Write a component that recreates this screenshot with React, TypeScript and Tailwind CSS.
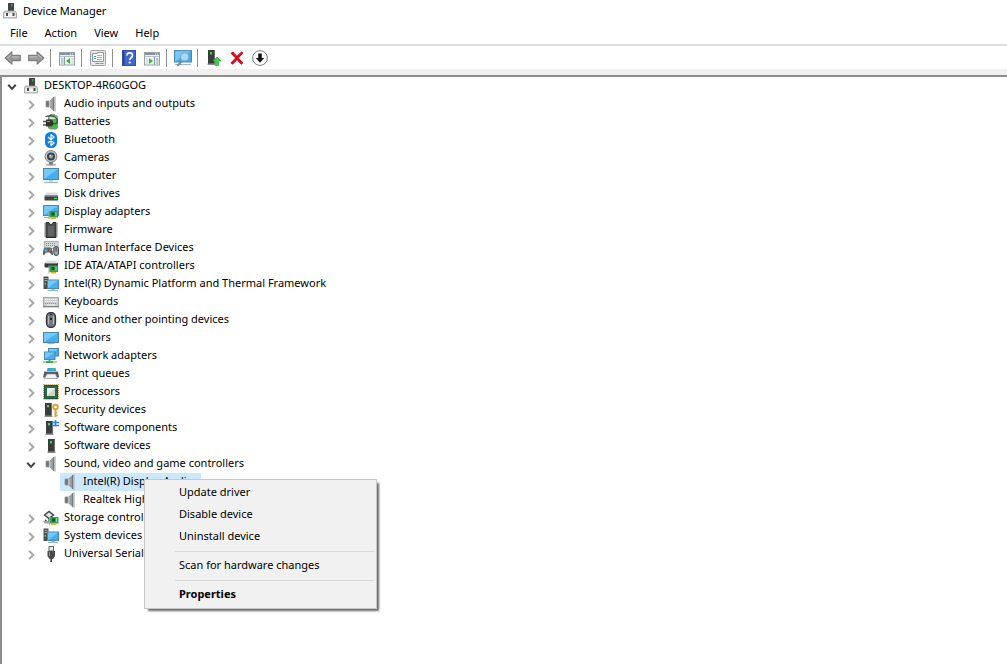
import { useState, type ReactNode } from "react";

function Svg({ children, size = 16 }: { children: ReactNode; size?: number }) {
  return (
    <svg width={size} height={size} viewBox="0 0 16 16" fill="none" aria-hidden="true" className="block shrink-0">
      {children}
    </svg>
  );
}

/* ---------- shared drawing parts ---------- */

function Board({ x, y }: { x: number; y: number }) {
  return (
    <g transform={`translate(${x} ${y})`}>
      <path d="M.5 0v8" stroke="#a5a9a7" />
      <rect x="1" y="0" width="8.500" height="6.500" fill="#35a052" />
      <rect x="3" y="1.500" width="3" height="3" fill="#145528" />
      <path d="M7.500 1v4" stroke="#8fdc9c" />
      <path d="M2 7.200h5.500" stroke="#f0ad1e" strokeWidth="1.500" />
    </g>
  );
}

function Screen({ x, y, w, h }: { x: number; y: number; w: number; h: number }) {
  return (
    <g>
      <rect x={x + 0.5} y={y + 0.5} width={w - 1} height={h - 1} fill="#45aef2" stroke="#4b87ad" />
      <path d={`M${x + 1} ${y + h - 1}L${x + w - 1} ${y + 1}H${x + 1}z`} fill="#74c8fa" />
    </g>
  );
}

function Tower({ x, y = 1, w = 7, h = 14 }: { x: number; y?: number; w?: number; h?: number }) {
  return (
    <g>
      <rect x={x} y={y} width={w} height={h - 1} fill="#3c3c3c" />
      <path d={`M${x + w - 0.5} ${y}v${h - 1}`} stroke="#6e6e6e" />
      <rect x={x - 0.5} y={y + h - 1.5} width={w + 1} height="1.5" fill="#8d8d8d" />
      <rect x={x + 2} y={y + 2} width="2" height="2.4" fill="#35e04a" />
    </g>
  );
}

/* ---------- device icons ---------- */

const HostIcon = () => (
  <Svg>
    <rect x="6" y="0" width="6" height="8" fill="#404443" />
    <rect x="9" y="1" width="1.600" height="2.500" fill="#3f9f51" />
    <path d="M2.500 8h10.500l1.500 2v5H1.500V10z" fill="#cfd1d3" stroke="#9a9c9f" strokeWidth=".8" />
    <path d="M2.500 10.500h11v3.500h-11z" fill="#f4f4f4" />
    <path d="M5 10v3M11.500 10v3" stroke="#4a4a4a" strokeWidth="2" />
  </Svg>
);

const SpeakerIcon = () => (
  <Svg>
    <path d="M3 5h3v6H3z" fill="#6f7478" stroke="#8d9296" strokeWidth=".8" />
    <path d="M6 5L11.500 .3v15.400L6 11z" fill="#989da1" />
    <path d="M7 5v6" stroke="#d7dadc" />
    <path d="M10.700 1v14" stroke="#6b7175" />
    <path d="M12.200 .5v15" stroke="#b4bdc4" />
  </Svg>
);

const BatteryIcon = () => (
  <Svg>
    <rect x="7" y="0" width="5" height="2" rx=".5" fill="#8e9992" />
    <rect x="5.500" y="1.500" width="9" height="13.500" rx="2" fill="#45b94c" stroke="#7a8d7e" />
    <path d="M6.500 2.500h7v2.500h-7z" fill="#c5efc8" />
    <path d="M0 7.500h4M0 11h4" stroke="#55544f" strokeWidth="1.500" />
    <path d="M3 5.500h4c2.500 0 3.500 2 3.500 3.700s-1 3.300-3.500 3.300H3z" fill="#34352f" />
    <path d="M10 9.500c3 1 5-1 4-4S8 1 2.500 2.500" stroke="#3c4239" strokeWidth="1.100" />
    <path d="M4 7.500h3" stroke="#a09f8c" />
  </Svg>
);

const BluetoothIcon = () => (
  <Svg>
    <rect x="2" y="0" width="12" height="16" rx="5.500" fill="#0a7fee" />
    <path d="M5 5l6 6-3 2.500v-11L11 5l-6 6" stroke="#fff" strokeWidth="1.200" strokeLinejoin="round" />
  </Svg>
);

const CameraIcon = () => (
  <Svg>
    <ellipse cx="8" cy="14.700" rx="5.500" ry="1.200" fill="#b4b8bb" />
    <path d="M6 12h4v2.500H6z" fill="#74787b" />
    <circle cx="8" cy="6.500" r="5.900" fill="#c5c9cc" stroke="#777d81" />
    <circle cx="8" cy="6.500" r="4" fill="#3f4447" />
    <circle cx="8" cy="6.500" r="2" fill="#8aa1ae" />
    <circle cx="7.300" cy="5.800" r=".8" fill="#e8f4fb" />
  </Svg>
);

const ComputerIcon = () => (
  <Svg>
    <Screen x={0} y={0} w={16} h={12} />
    <path d="M6 12h4v2H6z" fill="#cdd3d7" />
    <path d="M1 14.500h14" stroke="#a3b9c5" strokeWidth="1.400" />
  </Svg>
);

const DiskIcon = () => (
  <Svg>
    <path d="M3.500 6.500h9.500L15 10H1.500z" fill="#dcdedf" />
    <rect x="1.500" y="9.500" width="13.500" height="5" rx=".6" fill="#3f4344" />
    <path d="M2 10.500h12.500" stroke="#6d7274" />
    <path d="M11 12.500h3" stroke="#35df4e" strokeWidth="1.400" />
  </Svg>
);

const DisplayIcon = () => (
  <Svg>
    <Screen x={0} y={1} w={16} h={11} />
    <path d="M1 13.500h5" stroke="#9bb3c0" />
    <Board x={5.5} y={7} />
  </Svg>
);

const FirmwareIcon = () => (
  <Svg>
    <path d="M3 .5h3a2 2 0 0 0 4 0h3v15H3z" fill="#4a4c4d" stroke="#2e3031" />
    <path d="M2 1.500v14M14 1.500v14" stroke="#85898b" strokeWidth="2" strokeDasharray="1 1" />
    <path d="M5 4h6v10H5z" fill="#616364" />
  </Svg>
);

const HidIcon = () => (
  <Svg>
    <rect x="1.500" y="1.500" width="13.500" height="7" fill="#d6dadd" stroke="#a9afb3" />
    <path d="M3 3.500h10M3 5.500h10" stroke="#7f888e" strokeDasharray="1 1" />
    <path d="M0 15c0-4 .5-7.500 2.500-7.500H7c2 0 3 3.500 3 7.500-1.500.5-2.500-2-3.500-2.500h-3C2 13 2 15.500 0 15z" fill="#5f6468" />
    <path d="M3 8.500v3.500M1.500 10.300h3" stroke="#4fc0ff" />
    <circle cx="7" cy="10" r="1" fill="#e35b3f" />
    <rect x="10.800" y="6.500" width="4.700" height="9" rx="2.300" fill="#9ea4a8" stroke="#43484c" />
    <path d="M13.100 7.500v4" stroke="#34383b" />
  </Svg>
);

const IdeIcon = () => (
  <Svg>
    <path d="M3 2.500h10l2 3H1.500z" fill="#dcdedf" />
    <rect x="1.500" y="5" width="13.500" height="4.500" rx="1" fill="#34383a" />
    <path d="M2.500 5.500h12" stroke="#7b8082" />
    <Board x={5.5} y={7.5} />
  </Svg>
);

const SystemIcon = () => (
  <Svg>
    <rect x="0.500" y="0.500" width="5" height="12.500" fill="#4c5053" />
    <path d="M1.500 2.500h3M1.500 4.500h3" stroke="#9ea5a9" />
    <rect x="1.500" y="7" width="1.500" height="1.500" fill="#3fe052" />
    <Screen x={4} y={3.5} w={12} h={9.5} />
    <path d="M8.500 13h3.500v1H8.500z" fill="#b3bdc3" />
    <path d="M5 14.500h10" stroke="#96b4c4" />
  </Svg>
);

const KeyboardIcon = () => (
  <Svg>
    <rect x=".5" y="3.500" width="15" height="9" fill="#c9cdd0" stroke="#a3a8ac" />
    <path d="M2 5.500h12M2 7.500h12" stroke="#f6f8f9" strokeDasharray="1.300 .7" />
    <path d="M2 9.500h12" stroke="#8b9196" strokeDasharray="1 1" />
    <path d="M4 11h8" stroke="#f6f8f9" />
    <path d="M0 12.800h16" stroke="#6f7579" />
  </Svg>
);

const MouseIcon = () => (
  <Svg>
    <rect x="3.500" y=".5" width="9" height="15" rx="4.500" fill="#74797d" stroke="#303438" strokeWidth="1.300" />
    <path d="M5.500 4v8M10.500 4v8" stroke="#b3b9bd" strokeWidth="1.200" />
    <path d="M8 2v6" stroke="#222629" strokeWidth="2" />
    <path d="M8 3v3" stroke="#8acbf2" />
  </Svg>
);

const MonitorIcon = () => (
  <Svg>
    <Screen x={0} y={2} w={16} h={11} />
    <path d="M4.500 13.500h7" stroke="#a3b5c0" />
  </Svg>
);

const NetworkIcon = () => (
  <Svg>
    <Screen x={5} y={0} w={11} h={8.5} />
    <Screen x={1} y={3.5} w={11.5} h={8.5} />
    <path d="M6.500 12v2" stroke="#5b9c68" strokeWidth="2" />
    <path d="M0 14h14" stroke="#c0c8c4" strokeWidth="2" />
    <path d="M3 14h7" stroke="#36b44a" strokeWidth="2" />
  </Svg>
);

const PrinterIcon = () => (
  <Svg>
    <path d="M4.500 2h8l1 4h-10z" fill="#35a1df" />
    <path d="M8.500 3h3" stroke="#42d15a" strokeWidth="1.400" />
    <path d="M1.500 5h13.500l1 6.500H0z" fill="#54595d" />
    <path d="M1 5.500h14.500" stroke="#b8bec2" />
    <path d="M4 8h8.500l2 4.500h-13z" fill="#f5f6f6" stroke="#8f9598" strokeWidth=".8" />
  </Svg>
);

const CpuIcon = () => (
  <Svg>
    <rect x=".7" y=".7" width="14.600" height="14.600" stroke="#ad9a4e" strokeWidth="1.200" strokeDasharray="1 1" />
    <rect x="1.500" y="1.500" width="13" height="13" fill="#2f6548" stroke="#235339" />
    <rect x="4" y="4" width="8" height="8" fill="#cfd1cf" />
    <path d="M4 12l8-8H4z" fill="#ecedec" />
  </Svg>
);

const SecurityIcon = () => (
  <Svg>
    <Tower x={2} />
    <circle cx="12.500" cy="5" r="2.300" stroke="#dba038" strokeWidth="1.900" />
    <path d="M12.500 7.500v7.500" stroke="#dba038" strokeWidth="2" />
    <path d="M13 11h1.800M13 13.500h1.800" stroke="#dba038" />
  </Svg>
);

const ComponentIcon = () => (
  <Svg>
    <Tower x={3} />
    <path d="M12.500 0v6.500M9 2.500h7M9 5.500h7" stroke="#2389d7" strokeWidth="1.600" />
  </Svg>
);

const SoftwareIcon = () => (
  <Svg>
    <Tower x={5} y={1} w={7} h={14} />
  </Svg>
);

const StorageIcon = () => (
  <Svg>
    <path d="M1.500 5L6 1.500 10.500 5 6 8.500z" fill="#e1e4e2" stroke="#464b49" strokeWidth="1.500" />
    <path d="M6 8.500v2h2M2 10l3 2.500" stroke="#464b49" strokeWidth="1.300" />
    <path d="M0 11h7v2.500H2z" fill="#9ca29f" />
    <Board x={6} y={7} />
  </Svg>
);

const UsbIcon = () => (
  <Svg>
    <rect x="6" y=".5" width="4.500" height="4.500" fill="#e5e7e8" stroke="#63686b" />
    <path d="M4.500 5h7.500v5l-2 3H6.500l-2-3z" fill="#484c4e" />
    <path d="M6.500 6v4" stroke="#8c9194" />
    <path d="M8.200 13v3" stroke="#3b3e40" strokeWidth="1.600" />
  </Svg>
);

/* ---------- toolbar icons ---------- */

const BackIcon = () => (
  <Svg size={18}>
    <path d="M1 8l6-5.500V5.700h7.500v4.600H7v3.200z" fill="#989898" stroke="#7c7c7c" strokeLinejoin="round" />
    <path d="M3 8l3.500-3M7 7h7" stroke="#b9b9b9" />
  </Svg>
);

const ForwardIcon = () => (
  <Svg size={18}>
    <path d="M15 8L9 2.500v3.200H1.500v4.600H9v3.200z" fill="#989898" stroke="#7c7c7c" strokeLinejoin="round" />
    <path d="M13 8L9.500 5M2 7h7" stroke="#b9b9b9" />
  </Svg>
);

function PaneIcon({ flip = false }: { flip?: boolean }) {
  return (
    <Svg>
      <rect x=".5" y="2.500" width="15" height="12.500" fill="#f1f3f4" stroke="#98a2a9" />
      <path d="M1 4h14" stroke="#8593a0" strokeWidth="2" />
      <path d="M11 4h3" stroke="#f3f6f8" strokeDasharray="1 1" />
      <path d="M1 6.500h14" stroke="#b5bfc6" />
      {flip ? (
        <>
          <path d="M10.500 7v8" stroke="#8e9ba5" />
          <path d="M12 9h2.500M12 11h2.500M12 13h2.500" stroke="#7fa3bb" />
          <path d="M2 9h2M2 11h2M2 13h2" stroke="#c3cbd0" />
          <path d="M5 8v6l4-3z" fill="#39b535" />
        </>
      ) : (
        <>
          <path d="M5.500 7v8" stroke="#8e9ba5" />
          <path d="M2 9h2.500M2 11h2.500M2 13h2.500" stroke="#7fa3bb" />
          <path d="M12.500 9h2M12.500 11h2M12.500 13h2" stroke="#c3cbd0" />
          <path d="M11 8v6l-4-3z" fill="#39b535" />
        </>
      )}
    </Svg>
  );
}

const PropertiesIcon = () => (
  <Svg>
    <rect x=".5" y=".5" width="15" height="15" rx="1" fill="#e6e9eb" stroke="#9aa2a8" />
    <path d="M2.500 3.500h5v-1h6v9h-11z" fill="#fff" stroke="#8f989e" />
    <path d="M4 6.500h2M4 8.500h2" stroke="#4196c9" />
    <path d="M7 5.500h5M7 7.500h5M7 9.500h5" stroke="#a5adb2" />
    <path d="M5.500 13.500h4" stroke="#39a6dd" />
    <path d="M10.500 13.500h3" stroke="#83898e" />
  </Svg>
);

const HelpIcon = () => (
  <Svg>
    <rect x="1.500" y=".5" width="13" height="15" fill="#4066cc" stroke="#3350ab" />
    <path d="M2.500 1v14" stroke="#2a4398" strokeWidth="2" />
    <path d="M6 5.500c0-3.400 5.500-3.400 5.500 0C11.500 7.500 8.700 8 8.700 10" stroke="#fff" strokeWidth="1.700" />
    <circle cx="8.700" cy="12.500" r="1.100" fill="#fff" />
  </Svg>
);

const ScanIcon = () => (
  <Svg size={18}>
    <Screen x={0} y={1} w={16} h={11} />
    <path d="M1 13.800h14" stroke="#a1b6c1" />
    <path d="M7 10.500L3 15" stroke="#72878f" strokeWidth="1.600" />
    <circle cx="9.500" cy="7" r="3.700" fill="#a5dbf8" stroke="#7fa6ba" />
  </Svg>
);

const UpdateIcon = () => (
  <Svg>
    <Tower x={2} y={0} w={7} h={15} />
    <path d="M11 7l4 4h-2.300v4.500H9.300V11H7z" fill="#3cd04a" stroke="#28a536" strokeWidth=".6" />
  </Svg>
);

const DeleteIcon = () => (
  <Svg>
    <path d="M1.500 3.200L4 1.500l4 4.300 4.500-4.300L14.500 3l-4.700 5 4.700 4.900-2.300 1.800L8 10.300l-4.500 4.400-2-1.700L6.100 8z" fill="#dc0a1e" />
  </Svg>
);

const DisableIcon = () => (
  <Svg>
    <circle cx="8" cy="8" r="7.400" fill="#fcfcfc" stroke="#818181" />
    <path d="M6.200 3.500h3.600V8h2.400L8 12.700 3.800 8h2.400z" fill="#161616" />
  </Svg>
);

/* ---------- data ---------- */

type Device = { label: string; icon: () => ReactNode; children?: Device[] };

const devices: Device[] = [
  { label: "Audio inputs and outputs", icon: SpeakerIcon },
  { label: "Batteries", icon: BatteryIcon },
  { label: "Bluetooth", icon: BluetoothIcon },
  { label: "Cameras", icon: CameraIcon },
  { label: "Computer", icon: ComputerIcon },
  { label: "Disk drives", icon: DiskIcon },
  { label: "Display adapters", icon: DisplayIcon },
  { label: "Firmware", icon: FirmwareIcon },
  { label: "Human Interface Devices", icon: HidIcon },
  { label: "IDE ATA/ATAPI controllers", icon: IdeIcon },
  { label: "Intel(R) Dynamic Platform and Thermal Framework", icon: SystemIcon },
  { label: "Keyboards", icon: KeyboardIcon },
  { label: "Mice and other pointing devices", icon: MouseIcon },
  { label: "Monitors", icon: MonitorIcon },
  { label: "Network adapters", icon: NetworkIcon },
  { label: "Print queues", icon: PrinterIcon },
  { label: "Processors", icon: CpuIcon },
  { label: "Security devices", icon: SecurityIcon },
  { label: "Software components", icon: ComponentIcon },
  { label: "Software devices", icon: SoftwareIcon },
  {
    label: "Sound, video and game controllers",
    icon: SpeakerIcon,
    children: [
      { label: "Intel(R) Display Audio", icon: SpeakerIcon },
      { label: "Realtek High Definition Audio", icon: SpeakerIcon },
    ],
  },
  { label: "Storage controllers", icon: StorageIcon },
  { label: "System devices", icon: SystemIcon },
  { label: "Universal Serial Bus controllers", icon: UsbIcon },
];

const toolGroups: { label: string; icon: ReactNode }[][] = [
  [
    { label: "Back", icon: <BackIcon /> },
    { label: "Forward", icon: <ForwardIcon /> },
  ],
  [{ label: "Show/Hide Console Tree", icon: <PaneIcon /> }],
  [{ label: "Properties", icon: <PropertiesIcon /> }],
  [
    { label: "Help", icon: <HelpIcon /> },
    { label: "Show/Hide Action Pane", icon: <PaneIcon flip /> },
  ],
  [{ label: "Scan for hardware changes", icon: <ScanIcon /> }],
  [
    { label: "Update device driver", icon: <UpdateIcon /> },
    { label: "Uninstall device", icon: <DeleteIcon /> },
    { label: "Disable device", icon: <DisableIcon /> },
  ],
];

const menuGroups = [["Update driver", "Disable device", "Uninstall device"], ["Scan for hardware changes"], ["Properties"]];

/* ---------- tree ---------- */

function Expander({ open, label, onClick }: { open: boolean; label: string; onClick: () => void }) {
  return (
    <button type="button" aria-label={`Toggle ${label}`} onClick={onClick} className="flex h-full w-4 shrink-0 items-center justify-center pt-px">
      <Svg size={12}>
        {open ? (
          <path d="M3 5l5 5.500L13 5" stroke="#404040" strokeWidth="2.600" />
        ) : (
          <path d="M5.500 2.500L11 8l-5.500 5.500" stroke="#a6a6a6" strokeWidth="2.600" />
        )}
      </Svg>
    </button>
  );
}

function TreeNode({ device, selected, onSelect }: { device: Device; selected: string; onSelect: (label: string) => void }) {
  const [open, setOpen] = useState(true);
  const expandable = device.children !== undefined;
  const Icon = device.icon;
  return (
    <li role="treeitem" aria-expanded={expandable && open} aria-selected={selected === device.label}>
      <div className="flex h-[18px] items-center">
        <Expander open={expandable && open} label={device.label} onClick={() => setOpen(!open)} />
        <button type="button" onClick={() => onSelect(device.label)} className="ml-1 flex h-full items-center whitespace-nowrap">
          <Icon />
          <span className="pb-0.5 pl-[5px]">{device.label}</span>
        </button>
      </div>
      {expandable && open && (
        <ul role="group" className="pl-[37px]">
          {device.children?.map((child) => {
            const ChildIcon = child.icon;
            const active = selected === child.label;
            return (
              <li key={child.label} role="treeitem" aria-selected={active} className="flex h-[18px]">
                <button
                  type="button"
                  onClick={() => onSelect(child.label)}
                  className={active ? "flex h-full items-center bg-[#cce8ff] pr-2 pl-0.5 whitespace-nowrap" : "flex h-full items-center pr-2 pl-0.5 whitespace-nowrap"}
                >
                  <ChildIcon />
                  <span className="pb-0.5 pl-[5px]">{child.label}</span>
                </button>
              </li>
            );
          })}
        </ul>
      )}
    </li>
  );
}

function ContextMenu() {
  return (
    <div role="menu" className="absolute top-[402px] left-[142px] w-[233px] border border-[#c8c8c8] bg-[#f1f1f1] p-0.5 shadow-[3px_3px_2px_-1px_rgba(0,0,0,0.6)]">
      {menuGroups.map((group, i) => (
        <div key={group[0]} role="group">
          {i > 0 && (
            <div className="ml-7 flex h-[7px] items-center">
              <div className="h-px w-full bg-[#d9d9d9]" />
            </div>
          )}
          {group.map((item) => (
            <button
              key={item}
              type="button"
              role="menuitem"
              className={item === "Properties" ? "block h-[22px] w-full pb-0.5 pl-8 text-left font-bold" : "block h-[22px] w-full pb-0.5 pl-8 text-left"}
            >
              {item}
            </button>
          ))}
        </div>
      ))}
    </div>
  );
}

export default function App() {
  const [selected, setSelected] = useState("Intel(R) Display Audio");
  const [rootOpen, setRootOpen] = useState(true);
  return (
    <div className="flex min-h-screen flex-col bg-white font-['Noto_Sans','Open_Sans',sans-serif] text-[11px] leading-4 text-black">
      <header>
        <div className="flex h-[22px] items-center gap-[5px] pl-0.5">
          <HostIcon />
          <h1>Device Manager</h1>
        </div>
        <nav aria-label="Menu bar" className="flex h-[22px] items-center gap-[17px] pl-2.5">
          {["File", "Action", "View", "Help"].map((item) => (
            <button key={item} type="button">
              {item}
            </button>
          ))}
        </nav>
        <div role="toolbar" aria-label="Tools" className="flex h-[25px] items-center border-t-2 border-[#dcdee0] pl-px">
          {toolGroups.map((group, i) => (
            <div key={group[0].label} className="flex items-center">
              {i > 0 && <span className="mr-1 ml-[3px] h-[18px] w-px bg-[#8e8e8e]" />}
              {group.map((tool) => (
                <button key={tool.label} type="button" aria-label={tool.label} className="flex h-[22px] w-[23px] items-center justify-center">
                  {tool.icon}
                </button>
              ))}
            </div>
          ))}
        </div>
        <div className="h-1.5 bg-[#f0f0f0]" />
      </header>
      <main className="relative flex-1 border-t-2 border-l-2 border-[#8c8c8c]">
        <ul role="tree" aria-label="Devices" className="pl-0.5">
          <li role="treeitem" aria-expanded={rootOpen}>
            <div className="flex h-[18px] items-center">
              <Expander open={rootOpen} label="DESKTOP-4R60GOG" onClick={() => setRootOpen(!rootOpen)} />
              <div className="ml-[3px] flex items-center">
                <HostIcon />
                <span className="pb-0.5 pl-[5px]">DESKTOP-4R60GOG</span>
              </div>
            </div>
            {rootOpen && (
              <ul role="group" className="pl-[19px]">
                {devices.map((device) => (
                  <TreeNode key={device.label} device={device} selected={selected} onSelect={setSelected} />
                ))}
              </ul>
            )}
          </li>
        </ul>
        <ContextMenu />
      </main>
    </div>
  );
}
